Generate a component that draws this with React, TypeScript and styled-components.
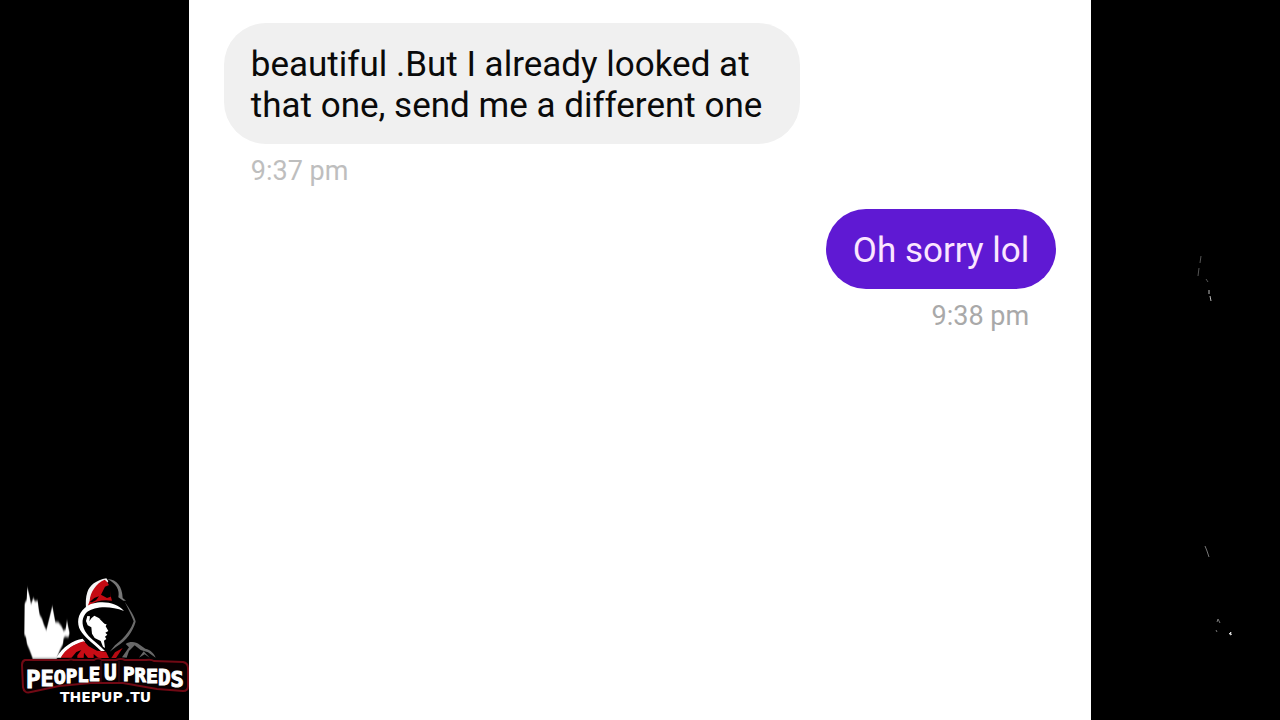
import React from "react";
import styled, { createGlobalStyle } from "styled-components";

const GlobalStyle = createGlobalStyle`
  * { box-sizing: border-box; }
  body { margin: 0; background: #000; font-family: Roboto, "Liberation Sans", sans-serif; }
`;

const Stage = styled.div`
  position: relative;
  display: flex;
  justify-content: center;
  min-height: 100vh;
  overflow: hidden;
  background: #000;
`;

const Conversation = styled.main`
  display: flex;
  flex: 0 0 70.5%;
  flex-direction: column;
  gap: 22px;
  padding: 23px 35px;
  background: #fff;
`;

const Message = styled.article<{ $sent?: boolean }>`
  display: flex;
  flex-direction: column;
  align-items: ${(p) => (p.$sent ? "flex-end" : "flex-start")};
  gap: 11px;
`;

const Bubble = styled.p<{ $sent?: boolean }>`
  max-width: 576px;
  margin: 0;
  padding: 21px 27px 18px;
  border-radius: 42px;
  background: ${(p) => (p.$sent ? "#5f19d3" : "#f0f0f0")};
  color: ${(p) => (p.$sent ? "#fbe6ff" : "#0a0a0a")};
  font-size: 35px;
  line-height: 41px;
`;

const Time = styled.time<{ $sent?: boolean }>`
  padding: 0 27px;
  color: ${(p) => (p.$sent ? "#a9a9a9" : "#bebebe")};
  font-size: 27px;
  line-height: 32px;
`;

const Brand = styled.svg`
  position: absolute;
  left: 15px;
  bottom: 10px;
  width: 180px;
  height: 140px;
`;

const Sparks = styled.svg`
  position: absolute;
  right: 40px;
  bottom: 70px;
  width: 60px;
  height: 400px;
`;

const Name = styled.text`
  fill: #fff;
  stroke: #fff;
  stroke-width: 1px;
  font-family: "DejaVu Sans Mono", monospace;
  font-weight: 700;
`;

const Site = styled.text`
  fill: #fff;
  font-family: "DejaVu Sans", sans-serif;
  font-size: 14px;
  font-weight: 700;
`;

type Glyph = { char: string; drop: number; size: number };

const people: Glyph[] = [
  { char: "P", drop: 0, size: 24 },
  { char: "E", drop: -2, size: 22 },
  { char: "O", drop: -2, size: 20 },
  { char: "P", drop: -1, size: 19 },
  { char: "L", drop: -1, size: 19 },
  { char: "E", drop: -1, size: 19 },
];

const preds: Glyph[] = [
  { char: "P", drop: 0, size: 19 },
  { char: "R", drop: 1, size: 19 },
  { char: "E", drop: 1, size: 20 },
  { char: "D", drop: 2, size: 21 },
  { char: "S", drop: 2, size: 22 },
];

function Word({ x, y, glyphs }: { x: number; y: number; glyphs: Glyph[] }) {
  return (
    <Name x={x} y={y}>
      {glyphs.map((g, i) => (
        <tspan key={i} dy={g.drop} fontSize={g.size}>
          {g.char}
        </tspan>
      ))}
    </Name>
  );
}

function BrandMark() {
  return (
    <Brand viewBox="0 0 180 140" role="img" aria-label="People U Preds">
      <defs>
        <filter id="flame-glow">
          <feGaussianBlur stdDeviation="2 4" />
        </filter>
      </defs>
      <g transform="scale(.333333)">
        {/* white flame */}
        <path filter="url(#flame-glow)" fill="#fff" d="M28 195 29 100 35 90 37 52 44 80 48 102 55 84 60 94 68 92 71 116 74 134 81 146 87 165 94 180 98 165 103 145 112 108 118 140 121 156 130 157 139 168 146 182 152 178 156 150 159 168 164 190 160 202 151 200 146 204 144 222 134 242 124 268H54L44 241 36 222 33 202Z" />
        {/* crown of the hood */}
        <path fill="#f5f5f5" d="M213 116C212 96 212 82 217 67 223 47 244 30 274 25L280 34 226 107Z" />
        <path fill="#c40a12" d="M224 92C226 66 243 40 269 29 282 37 288 56 287 78L291 92C268 88 243 91 219 108L217 112Z" />
        <path fill="#000" d="M258 74 270 50 284 44 288 60 287 80 276 84ZM224 96 238 84 252 79 243 91 231 97Z" />
        <path fill="#777" d="M277 27C307 29 321 49 323 84L333 92 325 92 310 82C315 60 304 40 277 27Z" />
        {/* rim of the face opening */}
        <path fill="#fff" d="M327 123C303 92 239 88 210 113 187 132 185 160 196 181 208 202 233 219 258 243L270 243C246 218 222 204 210 183 199 161 200 142 216 126 239 109 285 106 327 123Z" />
        <path fill="#6b6b6b" d="M329 95C344 115 362 145 362 155 353 186 334 211 306 229L284 245 300 226C333 201 350 174 356 154 349 135 338 113 329 95Z" />
        {/* face */}
        <path fill="#fff" d="M217 138 225 139 223 154 229 145 238 137 253 145 266 152 269 162 275 163 272 169 280 183 271 188 277 194 270 200 274 207 267 212 270 234 264 230 257 213 239 204 231 191 229 172 218 166 213 153Z" />
        <path fill="#000" d="M252 145 277 151 272 162 266 159Z" />
        {/* shoulders */}
        <path fill="#fff" d="M124 263C143 229 174 211 203 206L210 215C177 221 154 238 138 263Z" />
        <path fill="#c80c15" d="M137 263C153 236 178 222 207 214L221 229 246 242 273 245 282 264Z" />
        <path fill="#000" d="M169 264 184 246 199 240 187 256 187 264ZM206 264 207 248 219 264ZM236 264 236 252 250 264Z" />
        <path fill="#b60b12" d="M289 264 300 247 323 234 303 264Z" />
        <path fill="#686868" d="M321 262 342 232 332 222C344 214 362 214 374 224L391 236C407 239 418 251 422 263L399 247 377 240 359 226 342 243 335 263ZM372 263 386 244 404 263 389 253Z" />
      </g>
      <path
        fill="#080001"
        stroke="#710914"
        strokeWidth="2"
        d="M10 90H53Q56 89 59 90H79Q83 87 87 90H101Q106 88 110 90H131Q136 89 139 91L168 92Q173 93 173 98V116Q173 121 168 121L142 119 108 113H76L44 116 16 122Q9 124 8 117L7 95Q7 91 10 90Z"
      />
      <path fill="none" stroke="#430812" d="M86 91V112M104 91V112" />
      <Word x={11} y={118} glyphs={people} />
      <Word x={89} y={110} glyphs={[{ char: "U", drop: 0, size: 21 }]} />
      <Word x={108} y={111} glyphs={preds} />
      <Site x="45" y="132">THEPUP</Site>
      <Site x="110" y="132">.TU</Site>
    </Brand>
  );
}

function SparkMarks() {
  return (
    <Sparks viewBox="0 0 60 400" fill="none" stroke="#777" aria-hidden="true">
      <path d="M21 6 20 13M19 18 18 26M26 29 28 32" stroke="#555" />
      <path d="M29 40V44M30 46 31 51" stroke="#bbb" />
      <path d="M25 296 27 301 29 307" />
      <path d="M37 372 38 369 40 373M36 380 37 382" />
      <path d="M49 384 51 382 50 385 52 384" stroke="#ddd" />
    </Sparks>
  );
}

export default function App() {
  return (
    <>
      <GlobalStyle />
      <Stage>
        <Conversation>
          <Message>
            <Bubble>beautiful .But I already looked at that one, send me a different one</Bubble>
            <Time>9:37 pm</Time>
          </Message>
          <Message $sent>
            <Bubble $sent>Oh sorry lol</Bubble>
            <Time $sent>9:38 pm</Time>
          </Message>
        </Conversation>
        <BrandMark />
        <SparkMarks />
      </Stage>
    </>
  );
}
